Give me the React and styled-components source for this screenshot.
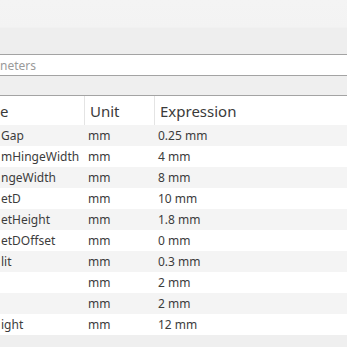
import React from 'react';
import styled, { createGlobalStyle } from 'styled-components';

const Global = createGlobalStyle`
  html, body {
    margin: 0;
    padding: 0;
    background: #efefef;
  }
  body {
    font-family: "Noto Sans", "Open Sans", sans-serif;
    color: #3c3c3c;
  }
`;

const Page = styled.div`
  width: 347px;
  height: 347px;
  display: flex;
  flex-direction: column;
  overflow: hidden;
  background: #efefef;
`;

const TopBar = styled.div`
  height: 54px;
  flex: none;
  background: linear-gradient(#f4f4f4 0%, #f3f3f3 50%, #eeeeee 52%, #eeeeee 100%);
  border-bottom: 1px solid #a3a3a3;
`;

const Search = styled.div`
  height: 20px;
  flex: none;
  background: #fff;
  border-bottom: 1px solid #a3a3a3;
  display: flex;
  align-items: center;
  font-size: 12px;
  color: #9a9a9a;
`;

const Band = styled.div`
  height: 19px;
  flex: none;
  background: #efefef;
  border-bottom: 1px solid #a3a3a3;
`;

const Grid = styled.div`
  display: grid;
  grid-template-columns: 84px 70px 1fr;
  background: #fff;
`;

const HeadCell = styled.div`
  height: 29px;
  display: flex;
  align-items: center;
  font-size: 15px;
  color: #3a3a3a;
  padding-left: ${p => p.$pad}px;
  border-left: ${p => (p.$first ? 'none' : '1px solid #e4e4e4')};
  white-space: nowrap;
  overflow: hidden;
`;

const Cell = styled.div`
  height: 21px;
  display: flex;
  align-items: center;
  font-size: 12px;
  color: #3c3c3c;
  padding-left: ${p => p.$pad}px;
  background: ${p => (p.$odd ? '#f4f4f4' : '#ffffff')};
  white-space: nowrap;
  overflow: hidden;
`;

const rows = [
  ['Gap', 'mm', '0.25 mm'],
  ['mHingeWidth', 'mm', '4 mm'],
  ['ngeWidth', 'mm', '8 mm'],
  ['etD', 'mm', '10 mm'],
  ['etHeight', 'mm', '1.8 mm'],
  ['etDOffset', 'mm', '0 mm'],
  ['lit', 'mm', '0.3 mm'],
  ['', 'mm', '2 mm'],
  ['', 'mm', '2 mm'],
  ['ight', 'mm', '12 mm'],
];

export default function App() {
  return (
    <Page>
      <Global />
      <TopBar />
      <Search>neters</Search>
      <Band />
      <Grid>
        <HeadCell $first $pad={0}>e</HeadCell>
        <HeadCell $pad={5}>Unit</HeadCell>
        <HeadCell $pad={5}>Expression</HeadCell>
        {rows.map((r, i) => (
          <React.Fragment key={i}>
            <Cell $odd={i % 2 === 0} $pad={1}>{r[0]}</Cell>
            <Cell $odd={i % 2 === 0} $pad={4}>{r[1]}</Cell>
            <Cell $odd={i % 2 === 0} $pad={4}>{r[2]}</Cell>
          </React.Fragment>
        ))}
      </Grid>
    </Page>
  );
}
